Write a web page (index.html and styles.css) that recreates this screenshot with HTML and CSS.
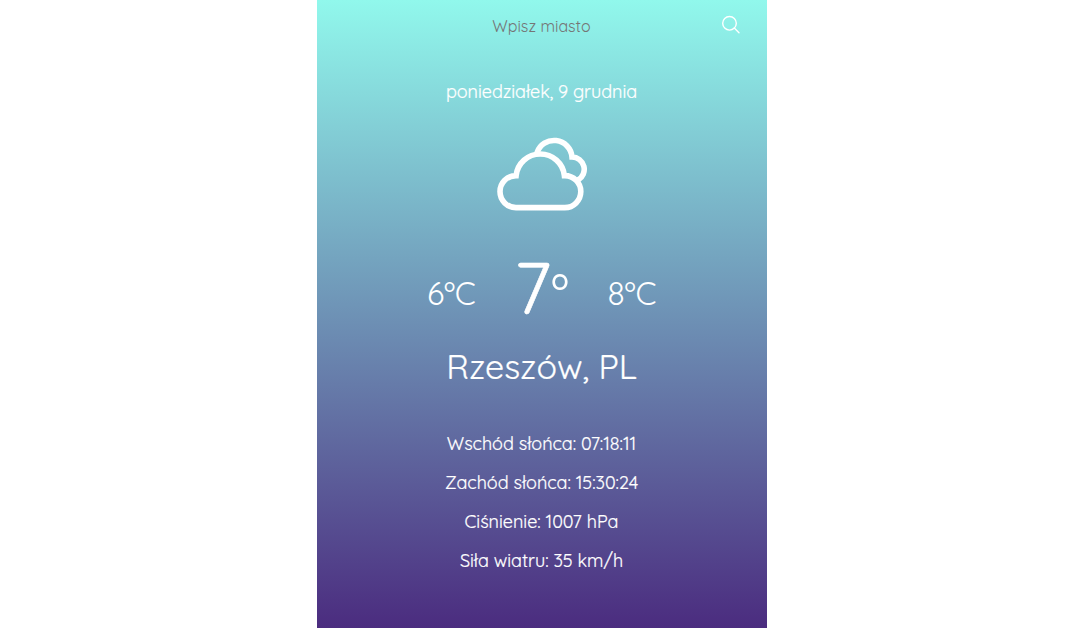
FILE: index.html
```html
<!DOCTYPE html>
<html lang="pl">
<head>
<meta charset="utf-8">
<title>Pogoda</title>
<link rel="stylesheet" href="styles.css">
</head>
<body>
<main class="app">
  <form class="search">
    <input class="search-input" type="text" placeholder="Wpisz miasto" aria-label="Wpisz miasto">
    <svg class="search-icon" viewBox="0 0 20 20"><circle cx="8.5" cy="8.3" r="6.8"/><path d="M13.3 13.1l4.7 4.7"/></svg>
  </form>
  <p class="date">poniedziałek, 9 grudnia</p>
  <svg class="cloud" viewBox="0 0 92 74">
    <path d="M19 70.600H67.800A16 16 0 0 0 67.800 38.600H67.400A24.300 24.300 0 0 0 19.100 38.600H19A16 16 0 0 0 19 70.600Z"/>
    <path d="M40 15.700A18 18 0 0 1 75 20A12.300 12.300 0 0 1 81 43"/>
  </svg>
  <section class="temps">
    <span class="temp">6ºC</span>
    <span class="temp now">7<span class="degree">º</span></span>
    <span class="temp">8ºC</span>
  </section>
  <h1 class="city">Rzeszów, PL</h1>
  <section class="details">
    <p>Wschód słońca: 07:18:11</p>
    <p>Zachód słońca: 15:30:24</p>
    <p>Ciśnienie: 1007 hPa</p>
    <p>Siła wiatru: 35 km/h</p>
  </section>
</main>
</body>
</html>
```
FILE: styles.css
```css
* { box-sizing: border-box; margin: 0; padding: 0; }
body { background: #fff; font-family: Quicksand, Lato, sans-serif; color: #fff; }
.app {
  width: 450px; height: 628px; margin-left: 316.500px;
  display: flex; flex-direction: column; align-items: center;
  background: linear-gradient(#91f8ec, #4b2c7f);
  overflow: hidden;
}
.search { width: 100%; height: 52px; display: grid; grid-template-columns: 70px 1fr 70px; align-items: center; }
.search-input {
  grid-column: 2; height: 52px; border: 0; outline: 0; background: transparent;
  text-align: center; font: 400 16px Quicksand, Lato, sans-serif;
}
.search-input::placeholder { color: #757575; }
.search-icon { width: 20px; height: 20px; margin: 0 0 2px 24.500px; }
.search-icon, .cloud { fill: none; stroke: #fff; }
.search-icon { stroke-width: 1.4; stroke-linecap: round; }
.date { height: 40px; margin-top: 20px; line-height: 40px; font-size: 18px; letter-spacing: -.05px; -webkit-text-stroke: .2px #fff; }
.cloud { width: 92px; height: 74px; margin: 25px 0 0 3px; stroke-width: 5.6; }
.temps { width: 229px; height: 88px; margin-top: 36px; display: flex; justify-content: space-between; align-items: center; }
.temp { font-size: 32px; line-height: 88px; padding-top: 4px; letter-spacing: -.3px; }
.now { font-size: 72px; padding: 0 0 8px; letter-spacing: 0; -webkit-text-stroke: .6px #fff; }
.degree { font-size: 50px; line-height: 0; vertical-align: 4px; -webkit-text-stroke: 0; }
.city { height: 60px; margin-top: 2px; line-height: 60px; font-size: 34px; font-weight: 400; -webkit-text-stroke: .2px #fff; }
.details { margin-top: 27px; text-align: center; font-size: 18px; letter-spacing: -.02px; line-height: 39px; -webkit-text-stroke: .2px #fff; }
```
